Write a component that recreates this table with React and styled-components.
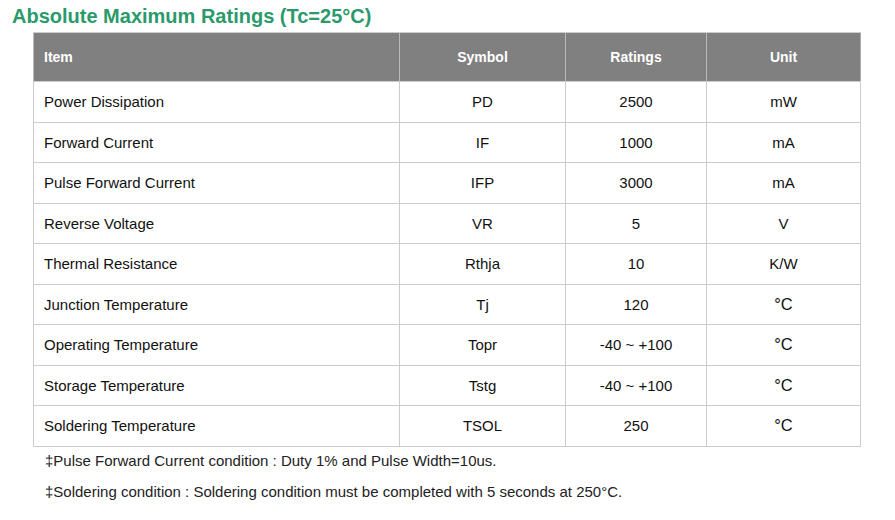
import * as React from "react";
import styled, { createGlobalStyle } from "styled-components";

const rows = [
  { item: "Power Dissipation", symbol: "PD", rating: "2500", unit: "mW" },
  { item: "Forward Current", symbol: "IF", rating: "1000", unit: "mA" },
  { item: "Pulse Forward Current", symbol: "IFP", rating: "3000", unit: "mA" },
  { item: "Reverse Voltage", symbol: "VR", rating: "5", unit: "V" },
  { item: "Thermal Resistance", symbol: "Rthja", rating: "10", unit: "K/W" },
  { item: "Junction Temperature", symbol: "Tj", rating: "120", unit: "°C" },
  { item: "Operating Temperature", symbol: "Topr", rating: "-40 ~ +100", unit: "°C" },
  { item: "Storage Temperature", symbol: "Tstg", rating: "-40 ~ +100", unit: "°C" },
  { item: "Soldering Temperature", symbol: "TSOL", rating: "250", unit: "°C" },
];

const notes = [
  "‡Pulse Forward Current condition : Duty 1% and Pulse Width=10us.",
  "‡Soldering condition : Soldering condition must be completed with 5 seconds at 250°C.",
];

const GlobalStyle = createGlobalStyle`
  body {
    margin: 0;
    background: #fff;
    font-family: "Liberation Sans", Arial, sans-serif;
    color: #111;
  }
`;

const Page = styled.div`
  padding: 5px 0 0 12px;
`;

const Title = styled.h2`
  margin: 0 0 4px;
  font-size: 20px;
  font-weight: bold;
  line-height: 23px;
  color: #2b9a6b;
`;

const Table = styled.table`
  margin-left: 21px;
  width: 827px;
  border-collapse: collapse;
  border: 1px solid #aaa;
  table-layout: fixed;
`;

const HeadCell = styled.th`
  height: 48px;
  padding: 0 10px;
  background: #808080;
  color: #fff;
  font-size: 14px;
  font-weight: bold;
  text-align: ${(p) => (p.$left ? "left" : "center")};
  border-top: 1px solid #ccc;
  border-left: 1px solid #bbb;
`;

const Cell = styled.td`
  height: 39.5px;
  padding: 0 10px;
  font-size: ${(p) => (p.$big ? "16.5px" : "15px")};
  text-align: ${(p) => (p.$left ? "left" : "center")};
  border: 1px solid #ccc;
`;

const Notes = styled.div`
  padding: 5px 0 0 33px;
  display: flex;
  flex-direction: column;
  gap: 13px;
`;

const Note = styled.p`
  margin: 0;
  font-size: 15px;
  line-height: 18px;
  color: #222;
`;

export default function App() {
  return (
    <>
      <GlobalStyle />
      <Page>
        <Title>Absolute Maximum Ratings (Tc=25°C)</Title>
        <Table>
          <colgroup>
            <col style={{ width: 366 }} />
            <col style={{ width: 166 }} />
            <col style={{ width: 141 }} />
            <col style={{ width: 154 }} />
          </colgroup>
          <thead>
            <tr>
              <HeadCell $left>Item</HeadCell>
              <HeadCell>Symbol</HeadCell>
              <HeadCell>Ratings</HeadCell>
              <HeadCell>Unit</HeadCell>
            </tr>
          </thead>
          <tbody>
            {rows.map((r) => (
              <tr key={r.item}>
                <Cell $left>{r.item}</Cell>
                <Cell>{r.symbol}</Cell>
                <Cell>{r.rating}</Cell>
                <Cell $big={r.unit === "°C"}>{r.unit}</Cell>
              </tr>
            ))}
          </tbody>
        </Table>
        <Notes>
          {notes.map((n) => (
            <Note key={n}>{n}</Note>
          ))}
        </Notes>
      </Page>
    </>
  );
}
